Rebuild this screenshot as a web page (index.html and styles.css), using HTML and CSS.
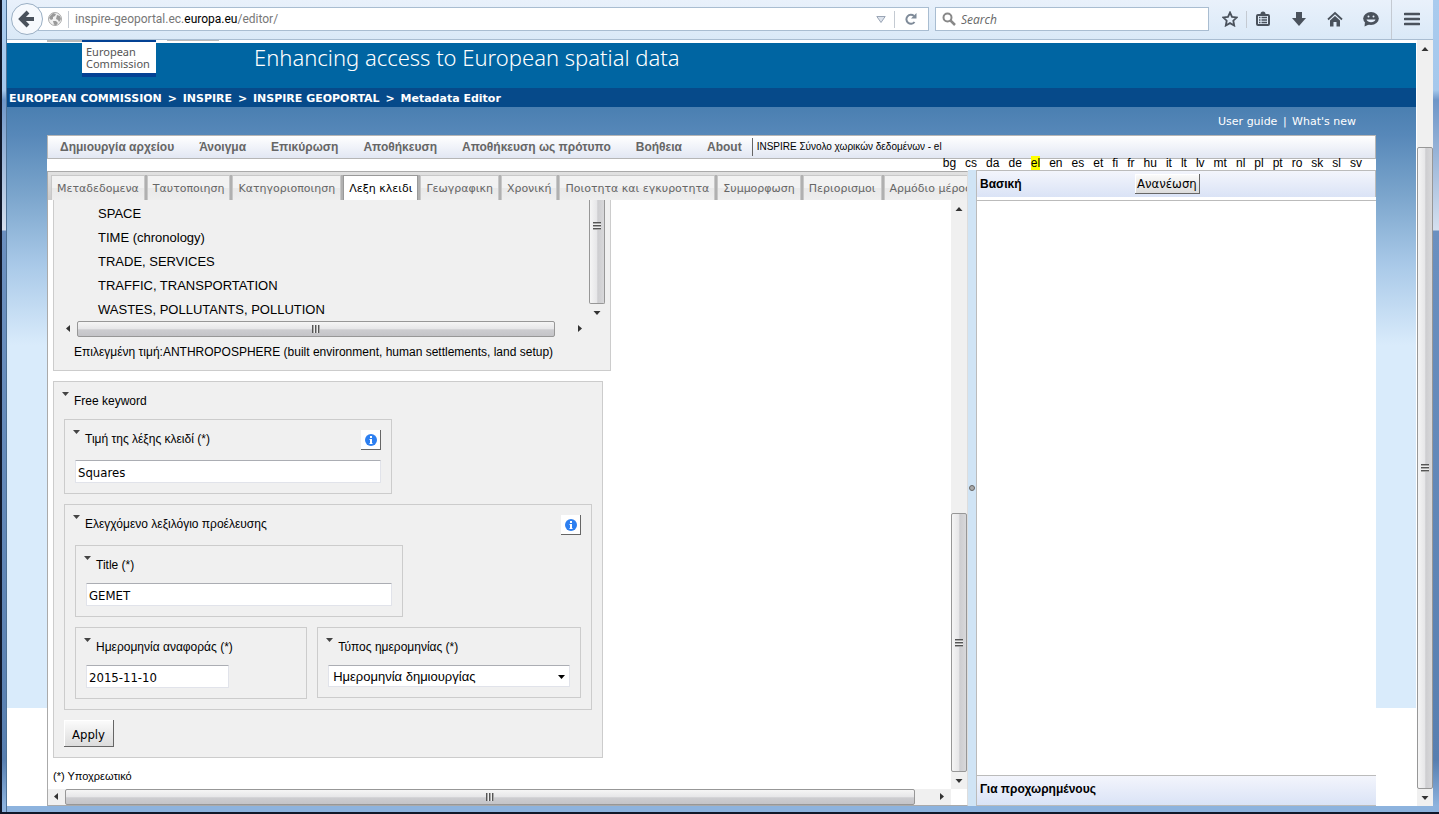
FILE: index.html
```html
<!DOCTYPE html>
<html lang="el">
<head>
<meta charset="utf-8">
<title>INSPIRE Metadata Editor</title>
<link rel="stylesheet" href="styles.css">
</head>
<body>
<svg class="defs" aria-hidden="true">
  <symbol id="up" viewBox="0 0 7 4"><path d="M3.5 0L7 4H0z"/></symbol>
  <symbol id="down" viewBox="0 0 7 4"><path d="M0 0h7L3.5 4z"/></symbol>
  <symbol id="left" viewBox="0 0 4 7"><path d="M4 0v7L0 3.5z"/></symbol>
  <symbol id="right" viewBox="0 0 4 7"><path d="M0 0l4 3.5L0 7z"/></symbol>
  <symbol id="info" viewBox="0 0 12 12"><circle cx="6" cy="6" r="6" fill="#2d7ff0"/><path d="M5 2h2v2H5zM4.500 5H7v4h.5v1h-3V9H5V6h-.5z" fill="#fff"/></symbol>
</svg>
<div class="window">
  <header class="toolbar">
    <button class="back" aria-label="Back"><svg viewBox="0 0 34 34"><circle cx="17" cy="17" r="15.500" fill="#f6f9fd" stroke="#9aafc4"/><path d="M24 17H13M18 10l-7 7 7 7" fill="none" stroke="#4a525c" stroke-width="4"/></svg></button>
    <div class="urlbox">
      <svg class="globe" viewBox="0 0 14 14"><circle cx="7" cy="7" r="6.500" fill="#f1f1f1" stroke="#aaa"/><path d="M2 4l3-3 3 1-1 2-2 1v2l-2 1-2-2zM9 3l3 1 1 3-2 3-1-2-2-1zM5 9l3 0 2 2-2 2.500-2-1z" fill="#999"/></svg>
      <span class="sep"></span>
      <span class="url">inspire-geoportal.ec.<b>europa.eu</b>/editor/</span>
      <svg class="drop" viewBox="0 0 10 7"><path d="M.8.500h8.400L5 6.500z" fill="#dde3ec" stroke="#9aa5b5"/></svg>
      <span class="sep tall"></span>
      <button class="plain" aria-label="Reload"><svg width="12" height="12" viewBox="0 0 12 12"><path d="M9.500 9A4.500 4.500 0 1 1 9 3" fill="none" stroke="#7f8b99" stroke-width="2"/><path d="M11.500 0v5.500H6z" fill="#7f8b99"/></svg></button>
    </div>
    <label class="search"><svg width="14" height="14" viewBox="0 0 14 14"><circle cx="5.500" cy="5.500" r="4" fill="none" stroke="#888" stroke-width="2"/><path d="M8.500 8.500L13 13" stroke="#888" stroke-width="2.500"/></svg><input type="search" placeholder="Search" aria-label="Search"></label>
    <nav class="tools">
      <button class="plain" aria-label="Bookmark"><svg viewBox="0 0 16 16"><path d="M8 1.500l2 4.300 4.800.6-3.500 3.300.9 4.800L8 12.100l-4.200 2.400.9-4.800L1.200 6.400 6 5.800z" fill="none" stroke="#4a525c" stroke-width="1.800"/></svg></button>
      <span class="sep"></span>
      <button class="plain" aria-label="Bookmarks list"><svg viewBox="0 0 16 16"><path d="M3 3h2.500a2.500 2.500 0 0 1 5 0H13a2 2 0 0 1 2 2v8a2 2 0 0 1-2 2H3a2 2 0 0 1-2-2V5a2 2 0 0 1 2-2zM3 5v8h10V5z" fill="#4a525c" fill-rule="evenodd"/><path d="M4 6.500h1.500M6.500 6.500H12M4 9h1.500M6.500 9H12M4 11.500h1.500M6.500 11.500H12" stroke="#4a525c" stroke-width="1.300"/></svg></button>
      <button class="plain" aria-label="Downloads"><svg viewBox="0 0 16 16"><path d="M5 1h6v6h4l-7 8-7-8h4z" fill="#4a525c"/></svg></button>
      <button class="plain" aria-label="Home"><svg viewBox="0 0 16 16"><path d="M1 8.500L8 2l7 6.500" fill="none" stroke="#4a525c" stroke-width="1.800"/><path d="M3 9.500l5-4.500 5 4.500v6H9.500V11h-3v4.500H3z" fill="#4a525c"/></svg></button>
      <button class="plain" aria-label="Chat"><svg viewBox="0 0 16 16"><ellipse cx="8" cy="7.500" rx="7.800" ry="6.500" fill="#4a525c"/><path d="M2 11l-.5 4.500L7 13z" fill="#4a525c"/><circle cx="5.500" cy="5.500" r="1" fill="#e4eefa"/><circle cx="10.500" cy="5.500" r="1" fill="#e4eefa"/><path d="M3.500 8.500h9c-1 3.500-8 3.500-9 0z" fill="#e4eefa"/></svg></button>
      <span class="sep full"></span>
      <button class="plain" aria-label="Menu"><svg viewBox="0 0 16 16"><path d="M1 3h14M1 8h14M1 13h14" stroke="#4a525c" stroke-width="2.600" stroke-linecap="round"/></svg></button>
    </nav>
  </header>

  <div class="viewport">
    <div class="page">
      <div class="banner">
        <div class="logo">European<br>Commission</div>
        <div class="tagline">Enhancing access to European spatial data</div>
      </div>
      <nav class="crumbs"><a href="#">EUROPEAN COMMISSION</a> &gt; <a href="#">INSPIRE</a> &gt; <a href="#">INSPIRE GEOPORTAL</a> &gt; <span>Metadata Editor</span></nav>
      <div class="help"><a href="#">User guide</a> | <a href="#">What's new</a></div>

      <main class="app">
        <nav class="menubar">
          <a href="#">Δημιουργία αρχείου</a><a href="#">Άνοιγμα</a><a href="#">Επικύρωση</a><a href="#">Αποθήκευση</a><a href="#">Αποθήκευση ως πρότυπο</a><a href="#">Βοήθεια</a><a href="#">About</a>
          <span class="status">INSPIRE Σύνολο χωρικών δεδομένων - el</span>
        </nav>
        <nav class="langs"><a href="#">bg</a><a href="#">cs</a><a href="#">da</a><a href="#">de</a><a href="#" class="on">el</a><a href="#">en</a><a href="#">es</a><a href="#">et</a><a href="#">fi</a><a href="#">fr</a><a href="#">hu</a><a href="#">it</a><a href="#">lt</a><a href="#">lv</a><a href="#">mt</a><a href="#">nl</a><a href="#">pl</a><a href="#">pt</a><a href="#">ro</a><a href="#">sk</a><a href="#">sl</a><a href="#">sv</a></nav>

        <div class="panes">
          <section class="editor">
            <div class="tabs" role="tablist">
              <button role="tab">Μεταδεδομενα</button><button role="tab">Ταυτοποιηση</button><button role="tab">Κατηγοριοποιηση</button><button role="tab" class="on" aria-selected="true">Λεξη κλειδι</button><button role="tab">Γεωγραφικη</button><button role="tab">Χρονική</button><button role="tab">Ποιοτητα και εγκυροτητα</button><button role="tab">Συμμορφωση</button><button role="tab">Περιορισμοι</button><button role="tab">Αρμόδιο μέρος</button>
            </div>
            <div class="scroller">
              <div class="form">
                <div class="group first">
                  <div class="treebox">
                    <ul class="tree"><li>SPACE</li><li>TIME (chronology)</li><li>TRADE, SERVICES</li><li>TRAFFIC, TRANSPORTATION</li><li>WASTES, POLLUTANTS, POLLUTION</li></ul>
                    <div class="vbar"><span class="thumb cut"><i class="grip"></i></span><svg class="arrow"><use href="#down"/></svg></div>
                    <div class="hbar"><svg class="arrow side"><use href="#left"/></svg><span class="thumb"><i class="grip"></i></span><svg class="arrow side"><use href="#right"/></svg></div>
                  </div>
                  <p class="chosen">Επιλεγμένη τιμή:ANTHROPOSPHERE (built environment, human settlements, land setup)</p>
                </div>

                <div class="group keyword">
                  <div class="head"><svg class="tri"><use href="#down"/></svg><span>Free keyword</span></div>
                  <div class="stack">
                    <div class="group field">
                      <div class="head"><svg class="tri"><use href="#down"/></svg><label for="kw">Τιμή της λέξης κλειδί (*)</label><button class="info" aria-label="Info"><svg><use href="#info"/></svg></button></div>
                      <input id="kw" type="text" value="Squares">
                    </div>
                    <div class="group">
                      <div class="head"><svg class="tri"><use href="#down"/></svg><span>Ελεγχόμενο λεξιλόγιο προέλευσης</span><button class="info" aria-label="Info"><svg><use href="#info"/></svg></button></div>
                      <div class="stack">
                        <div class="group field">
                          <div class="head"><svg class="tri"><use href="#down"/></svg><label for="title">Title (*)</label></div>
                          <input id="title" type="text" value="GEMET">
                        </div>
                        <div class="pair">
                          <div class="group date">
                            <div class="head"><svg class="tri"><use href="#down"/></svg><label for="date">Ημερομηνία αναφοράς (*)</label></div>
                            <input id="date" type="text" value="2015-11-10">
                          </div>
                          <div class="group kind">
                            <div class="head"><svg class="tri"><use href="#down"/></svg><label for="kind">Τύπος ημερομηνίας (*)</label></div>
                            <div class="select"><select id="kind"><option>Ημερομηνία δημιουργίας</option></select><svg><use href="#down"/></svg></div>
                          </div>
                        </div>
                      </div>
                    </div>
                    <button class="btn apply">Apply</button>
                  </div>
                </div>
                <p class="required">(*) Υποχρεωτικό</p>
              </div>
              <div class="vbar"><svg class="arrow"><use href="#up"/></svg><span class="before"></span><span class="thumb"><i class="grip"></i></span><svg class="arrow"><use href="#down"/></svg></div>
              <div class="hbar"><svg class="arrow side"><use href="#left"/></svg><span class="thumb"><i class="grip"></i></span><svg class="arrow side"><use href="#right"/></svg></div>
            </div>
          </section>
          <div class="splitter"><i></i></div>
          <aside class="results">
            <div class="bar top"><h2>Βασική</h2><button class="btn">Ανανέωση</button></div>
            <div class="blank"></div>
            <div class="bar bottom"><h2>Για προχωρημένους</h2></div>
          </aside>
        </div>
      </main>
    </div>
    <div class="vbar outer"><svg class="arrow"><use href="#up"/></svg><span class="before"></span><span class="thumb"><i class="grip"></i></span><svg class="arrow"><use href="#down"/></svg></div>
  </div>
</div>
</body>
</html>
```
FILE: styles.css
```css
* { box-sizing: border-box; }
body {
  margin: 0;
  background: #10182a;
  font: 12px "Liberation Sans", Arial, sans-serif;
  color: #000;
}
button, input, select { font: inherit; color: inherit; margin: 0; }
a { color: inherit; text-decoration: none; }
p, h2, ul { margin: 0; padding: 0; }
.defs { position: absolute; width: 0; height: 0; }

.window {
  height: 100vh;
  display: flex;
  flex-direction: column;
  padding: 0 6px 8px 7px;
  background:
    linear-gradient(#10182a, #10182a) left / 2px 100% no-repeat,
    linear-gradient(#10182a, #10182a) bottom / 100% 2px no-repeat,
    linear-gradient(#4f7296, #4f7296) 6px 0 / 1px 100% no-repeat,
    linear-gradient(#8db3de, #8db3de) bottom / 100% 8px no-repeat,
    linear-gradient(#a9cbee 0, #a5c8ec 90px, #6e96c8 100px, #d5e0ef 230px, #6b90c0 231px, #587fb0 760px, #8db3de 806px);
}

/* browser toolbar */
.toolbar {
  flex: none;
  height: 40px;
  display: flex;
  padding: 0 13px 0 3px;
  background: linear-gradient(#e9f1fb, #dae9f7);
  border-bottom: 1px solid #a9bdd1;
}
.toolbar .sep { width: 1px; height: 17px; background: #c4cad2; }
.plain { display: flex; border: 0; padding: 0; background: none; }
.back {
  position: relative;
  z-index: 1;
  width: 34px;
  height: 34px;
  margin: 2px -6px 0 0;
  padding: 0;
  border: 0;
  background: none;
}
.back svg { display: block; }
.urlbox, .search {
  display: flex;
  align-items: center;
  height: 24px;
  margin-top: 7px;
  border: 1px solid #a9bdd1;
  background: #fff;
  font-family: "Open Sans", sans-serif;
}
.urlbox { flex: 892; padding: 0 11px 0 9px; color: #777; font-family: Roboto, sans-serif; }
.urlbox b { font-weight: 400; color: #000; }
.globe { width: 14px; height: 14px; margin-right: 6px; }
.url { flex: 1; padding-left: 6px; }
.drop { width: 10px; height: 7px; margin-right: 8px; }
.urlbox .tall { margin-right: 10px; }
.search { flex: 273; margin-left: 6px; padding-left: 6px; gap: 4px; }
.search input { flex: 1; min-width: 0; border: 0; outline: 0; padding: 0 1px; background: none; font-style: italic; }
.search input::placeholder { color: #666; }
.tools { display: flex; align-items: center; height: 38px; margin-left: 13px; gap: 20px; }
.tools svg { width: 16px; height: 16px; }
.tools .sep { margin: 0 -12px; }
.tools .full { height: 39px; margin: 0 -8px 0 -8px; }

/* page */
.viewport { flex: 1; min-height: 0; display: flex; background: #fff; }
.page {
  flex: 1;
  min-width: 0;
  display: flex;
  flex-direction: column;
  background: linear-gradient(#4a7fb1 67px, #5788b9 95px, #7ba5cc 155px, #a9c9e8 225px, #d9ebfb 305px) top / 100% 668px no-repeat #fff;
}
.banner {
  height: 48px;
  display: flex;
  align-items: flex-start;
  background:
    linear-gradient(#bbb, #bbb) 40px 0 / 35px 2px no-repeat,
    linear-gradient(#bbb, #bbb) 160px 0 / 52px 1px no-repeat,
    linear-gradient(#fff 3px, #0065a2 3px);
}
.logo {
  width: 74px;
  height: 37px;
  margin-left: 75px;
  padding: 4px 0 0 4px;
  border: solid #034194;
  border-width: 2px 0 4px;
  background: #fff;
  font: 11px/12px "Noto Sans", sans-serif;
  color: #555;
}
.tagline { margin: 2px 0 0 98px; font: 300 22px/30px "Noto Sans", "Open Sans", sans-serif; color: #fff; white-space: nowrap; }
.crumbs {
  padding: 0 2px;
  background: #064a8a;
  color: #fff;
  font: bold 11px/21px "DejaVu Sans", Verdana, sans-serif;
  height: 19px;
}
.crumbs a { margin-right: 2px; }
.crumbs a + a, .crumbs span { margin-left: 2px; }
.help { padding: 0 60px 0 0; height: 28px; text-align: right; color: #fff; font: 11px/29px "DejaVu Sans", Verdana, sans-serif; }
.help a:first-child { margin-right: 2px; }
.help a:last-child { margin-left: 2px; }

.app { flex: 1; min-height: 0; margin: 0 40px; display: flex; flex-direction: column; background: #fff; }
.menubar {
  display: flex;
  align-items: center;
  gap: 25px;
  flex: none;
  height: 24px;
  padding-left: 12px;
  border: 1px solid #b6b6b6;
  background: linear-gradient(#fff, #e2e7f3);
  font-weight: bold;
  color: #666;
  white-space: nowrap;
}
.status { margin-left: -15px; padding-left: 4px; border-left: 1px solid #666; font-size: 10px; line-height: 18px; font-weight: 400; color: #000; }
.langs { display: flex; justify-content: flex-end; gap: 9px; flex: none; height: 14px; margin-top: -3px; padding-right: 14px; line-height: 14px; }
.langs .on { background: #ff0; }
.panes { flex: 1; min-height: 0; display: grid; grid-template-columns: minmax(0, 1fr) 8px 400px; }

/* editor */
.editor { display: flex; flex-direction: column; min-height: 0; margin-top: 1px; border: 1px solid #aaa; border-right-color: #ddd; }
.tabs { display: flex; flex: none; gap: 2px; height: 28px; padding: 3px 0 0 3px; overflow: hidden; background: linear-gradient(#e1e1e1, #ccc); }
.tabs button {
  flex: none;
  padding: 0 5px;
  border: solid #c8c8c8;
  border-width: 1px 1px 0;
  box-shadow: 2px 0 #b0b0b0;
  background: linear-gradient(#f2f2f2 50%, #e9e9e9 50%, #eee);
  color: #666;
  font: 11px "DejaVu Sans", Verdana, sans-serif;
  white-space: nowrap;
}
.tabs .on { background: #fff; border-color: #999; color: #000; }
.scroller { flex: 1; min-height: 0; display: grid; grid-template: minmax(0, 1fr) 16px / minmax(0, 1fr) 16px; }
.form { min-height: 0; padding-left: 5px; overflow: hidden; }

.group { border: 1px solid #ccc; background: #f0f0f0; }
.first { width: 558px; padding: 0 5px 0 6px; border-top: 0; }
.treebox { display: grid; grid-template: 121px 16px / 1fr 16px; }
.tree { list-style: none; padding: 2px 0 0 38px; overflow: hidden; font-size: 13px; line-height: 24px; }
.chosen { padding: 7px 0 10px 14px; line-height: 16px; }
.keyword { width: 550px; margin-top: 10px; }
.head { display: flex; align-items: flex-start; gap: 5px; padding: 10px 10px 8px 8px; line-height: 19px; }
.tri { flex: none; width: 7px; height: 4px; fill: #444; }
.stack { display: flex; flex-direction: column; align-items: flex-start; gap: 10px; padding: 0 10px 10px; }
.stack > .group { width: 100%; }
.stack > .field { width: 328px; }
.pair { display: flex; align-items: flex-start; gap: 10px; width: 100%; }
.date { flex: 232; }
.kind { flex: 264; }
.group > input { display: block; width: 306px; margin: 0 10px 10px; }
.date > input { width: 143px; }
.group > input, select {
  height: 23px;
  padding: 2px 2px 0;
  border: 1px solid #e1e3ea;
  border-top-color: #abadb3;
  border-radius: 1px;
  background: #fff;
  font: 13px "DejaVu Sans Condensed", Tahoma, sans-serif;
}
.select { position: relative; margin: 0 10px 10px; }
.select svg { position: absolute; right: 5px; top: 10px; width: 7px; height: 4px; pointer-events: none; }
select { display: block; appearance: none; width: 100%; height: 22px; padding: 0 4px; font: 13px "Liberation Sans", Arial, sans-serif; }
.info { display: flex; align-items: center; justify-content: center; width: 20px; height: 20px; margin: 0 0 2px auto; padding: 1px 0 0; border: solid #666; border-width: 0 1px 1px 0; background: #fff; }
.info svg { width: 12px; height: 12px; }
.btn {
  border: solid #666;
  border-width: 0 1px 1px 0;
  box-shadow: inset 1px 1px #fff;
  background: linear-gradient(#fcfcfc, #dcdcdc);
  font: 13px "DejaVu Sans Condensed", Tahoma, sans-serif;
}
.apply { height: 27px; padding: 2px 8px 0; }
.required { padding-top: 10px; font-size: 11px; line-height: 16px; }

/* scroll bars */
.vbar, .hbar { display: flex; background: #f0f0f0; }
.vbar { flex-direction: column; min-height: 0; }
.arrow { flex: none; width: 16px; height: 17px; padding: 7px 4px 6px; fill: #333; }
.side { width: 17px; height: 16px; padding: 4px 7px 5px 6px; }
.thumb { display: flex; align-items: center; justify-content: center; flex: 1; border: 1px solid #979797; border-radius: 2px; background: linear-gradient(90deg, #f5f5f5, #e6e6e8 50%, #cdcdd0 55%, #d8d8da); }
.hbar .thumb { background: linear-gradient(#f5f5f5, #e6e6e8 50%, #cdcdd0 55%, #c4c4c8); }
.grip { width: 8px; height: 8px; background: repeating-linear-gradient(#555 0 1px, #aaa 1px 2px, #eee 2px 3px); }
.hbar .grip { background: repeating-linear-gradient(90deg, #555 0 1px, #aaa 1px 2px, #eee 2px 3px); }
.cut { align-items: flex-start; padding-top: 22px; border-top: 0; border-radius: 0 0 2px 2px; }
.treebox .hbar .thumb { margin-right: 17px; }
.scroller > .vbar .before { flex: 296; }
.scroller > .vbar .thumb { flex: 257; }
.scroller > .hbar .thumb { margin-right: 19px; }
.outer { width: 17px; border-left: 1px solid #fff; }
.outer .before { flex: 90; }
.outer .thumb { flex: 640; }

/* results */
.splitter { display: flex; align-items: center; justify-content: center; background: #d0e4f5; }
.splitter i { width: 6px; height: 6px; border-radius: 3px; border: 1px solid #666; background: #aaa; }
.results { display: flex; flex-direction: column; min-height: 0; border-left: 1px solid #bbb; }
.bar { flex: none; display: grid; grid-template-columns: 155px auto; justify-content: start; padding: 3px; border-top: 1px solid #bbb; background: linear-gradient(#f3f5fc, #dae3f6); }
.bar h2 { font-size: 12px; line-height: 20px; white-space: nowrap; }
.top { height: 27px; border-right: 1px solid #bbb; }
.top .btn { height: 20px; padding: 0 2px; }
.blank { flex: 1; margin-top: 3px; border-top: 1px solid #bbb; }
.bottom { height: 31px; border-bottom: 1px solid #bbb; }
```
